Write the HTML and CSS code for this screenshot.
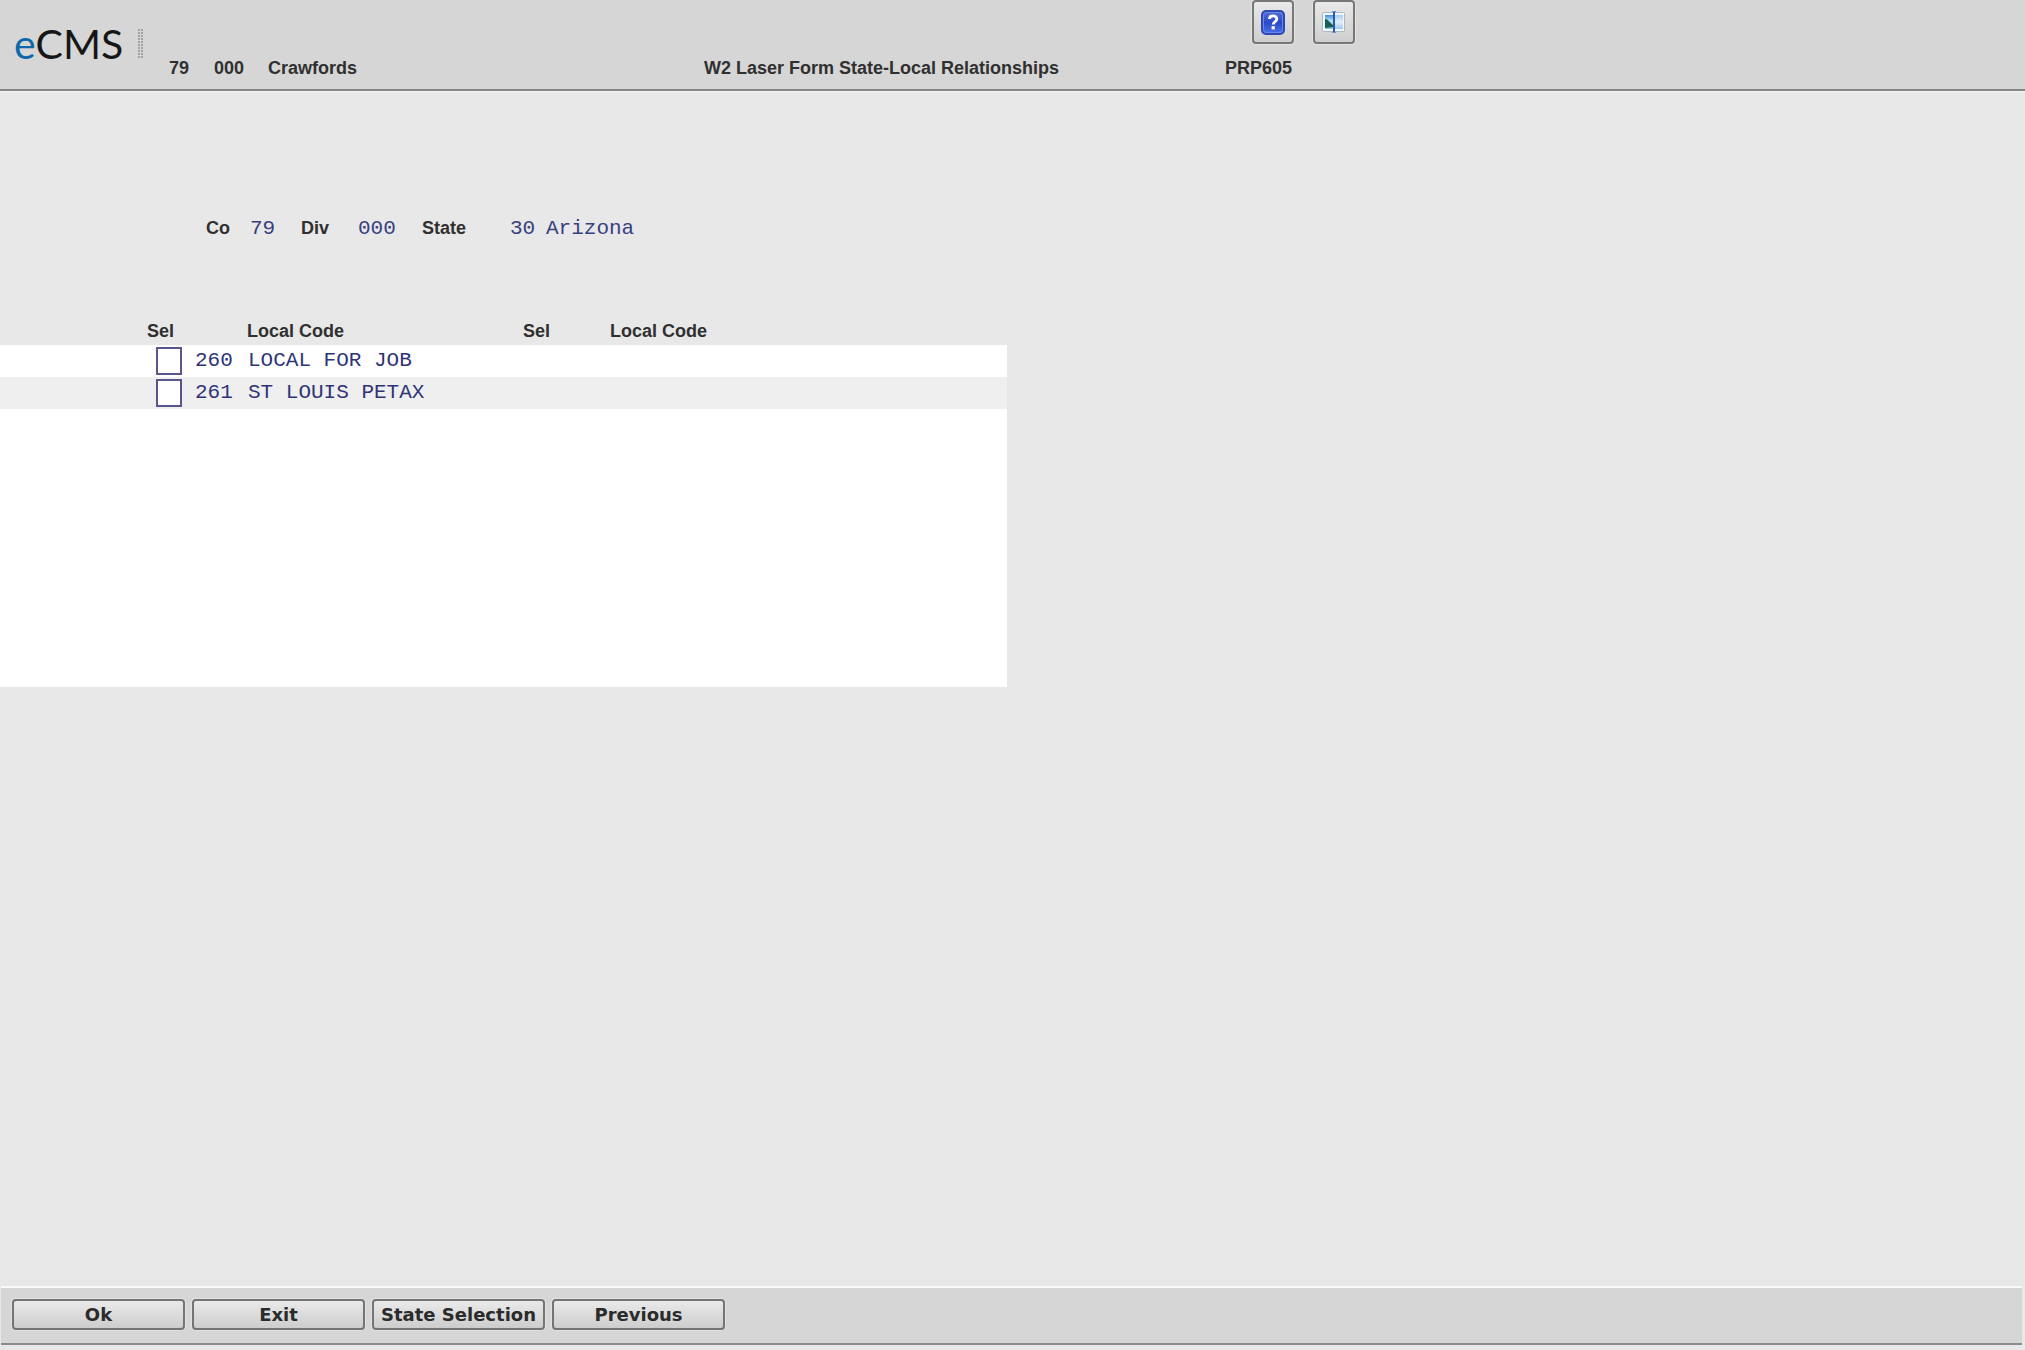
FILE: index.html
```html
<!DOCTYPE html>
<html lang="en">
<head>
<meta charset="utf-8">
<title>W2 Laser Form State-Local Relationships</title>
<link rel="stylesheet" href="styles.css">
</head>
<body>
<header class="topbar">
  <div class="brand">
    <span class="logo"><span class="logo-e">e</span>CMS</span>
    <svg class="grip" width="6" height="30" viewBox="0 0 6 30">
      <path d="M1 0V30M4 0V30" stroke="#a2a2a2" stroke-width="2" stroke-dasharray="2 1"/>
    </svg>
  </div>
  <div class="company"><span>79</span><span>000</span><span>Crawfords</span></div>
  <h1 class="title">W2 Laser Form State-Local Relationships</h1>
  <div class="side">
    <div class="tools">
      <button class="tool" type="button" aria-label="Help">
        <svg width="24" height="26" viewBox="0 0 24 26">
          <defs><linearGradient id="help" x1="0" y1="0" x2="0" y2="1"><stop offset="0" stop-color="#5872d8"/><stop offset=".5" stop-color="#2b48c8"/><stop offset="1" stop-color="#4a74ea"/></linearGradient></defs>
          <rect x="1" y="2" width="22" height="23" rx="4" fill="url(#help)" stroke="#3048b4" stroke-width="2"/>
          <rect x="2.500" y="3.500" width="19" height="20" rx="3" fill="none" stroke="#6c88e6"/>
          <path d="M8.500 10C8.500 5.800 15.800 5.800 15.800 10C15.800 12.700 12.200 12.500 12.200 15.600" fill="none" stroke="#fff" stroke-width="2.800"/>
          <rect x="10.600" y="17.200" width="3.200" height="3.200" fill="#fff"/>
        </svg>
      </button>
      <button class="tool" type="button" aria-label="Split view">
        <svg width="26" height="24" viewBox="0 0 26 24">
          <defs>
            <linearGradient id="sky" x1="0" y1="0" x2="0" y2="1"><stop offset="0" stop-color="#3f8fdc"/><stop offset=".4" stop-color="#b4def2"/><stop offset="1" stop-color="#7fc4d8"/></linearGradient>
            <linearGradient id="pale" x1="0" y1="0" x2="0" y2="1"><stop offset="0" stop-color="#a4cdf4"/><stop offset=".5" stop-color="#e2f0fb"/><stop offset="1" stop-color="#9cc6ee"/></linearGradient>
          </defs>
          <rect x="1.500" y="2.500" width="22" height="19" rx="1" fill="#f2f7fa" stroke="#a9b8c2"/>
          <rect x="4" y="5" width="8" height="14" fill="url(#sky)"/>
          <path d="M4 9C7 9 8 12 12 15V17L4 18Z" fill="#1c5c54"/>
          <rect x="14" y="5" width="8" height="14" fill="url(#pale)"/>
          <path d="M13 1V23" stroke="#2c56b4" stroke-width="2"/>
          <path d="M11 1.500H15M11 22.500H15" stroke="#6d91d2"/>
        </svg>
      </button>
    </div>
    <span class="program">PRP605</span>
  </div>
</header>

<main class="content">
  <div class="fields">
    <span class="label">Co</span><span>79</span>
    <span class="label">Div</span><span>000</span>
    <span class="label">State</span><span>30</span><span>Arizona</span>
  </div>
  <div class="list">
    <table class="locals">
      <colgroup><col class="c-sel"><col class="c-code"><col class="c-name"><col class="c-sel2"><col></colgroup>
      <thead>
        <tr><th class="sel-head">Sel</th><th class="code-head" colspan="2">Local Code</th><th>Sel</th><th>Local Code</th></tr>
      </thead>
      <tbody>
        <tr><td class="sel-cell"><input class="sel" type="text" maxlength="1" aria-label="Select 260"></td><td>260</td><td>LOCAL FOR JOB</td><td></td><td></td></tr>
        <tr><td class="sel-cell"><input class="sel" type="text" maxlength="1" aria-label="Select 261"></td><td>261</td><td>ST LOUIS PETAX</td><td></td><td></td></tr>
      </tbody>
    </table>
  </div>
</main>

<footer class="actions">
  <button class="action" type="button">Ok</button>
  <button class="action" type="button">Exit</button>
  <button class="action" type="button">State Selection</button>
  <button class="action" type="button">Previous</button>
</footer>
</body>
</html>
```
FILE: styles.css
```css
* { box-sizing: border-box; }

body {
  margin: 0;
  min-height: 100vh;
  display: flex;
  flex-direction: column;
  background: #e8e8e8;
  color: #303030;
  font: bold 18px/24px "Liberation Sans", Arial, sans-serif;
}

.topbar {
  display: grid;
  grid-template-columns: 169px 535px 521px 1fr;
  align-items: end;
  height: 91px;
  padding-bottom: 9px;
  background: #d6d6d6;
  border-bottom: 2px solid #858585;
  box-shadow: 0 1px #f4f4f4;
}

.brand {
  display: flex;
  align-items: center;
  gap: 15px;
  padding: 0 0 12px 14px;
}

.logo {
  font: 41px/48px Lato, sans-serif;
  color: #161616;
}

.logo-e { color: #0c68a8; }

.company {
  display: grid;
  grid-template-columns: 45px 54px auto;
}

.title {
  margin: 0;
  font: inherit;
}

.side {
  display: flex;
  flex-direction: column;
  gap: 12px;
}

.tools {
  display: flex;
  gap: 19px;
  padding-left: 27px;
}

.tool {
  display: flex;
  align-items: center;
  justify-content: center;
  width: 42px;
  height: 44px;
  padding: 0;
  border: 2px solid #777;
  border-radius: 4px;
  background: linear-gradient(#e9e9e9, #cecece);
  box-shadow: 0 0 0 1px #e4e4e4;
}

.content { flex: 1; }

.fields {
  display: grid;
  grid-template-columns: 44px 51px 57px 64px 88px 36px auto;
  align-items: baseline;
  padding: 125px 0 76px 206px;
  color: #38417f;
  font: 21px/24px "Liberation Mono", "Courier New", monospace;
}

.label {
  color: #303030;
  font: bold 18px/24px "Liberation Sans", Arial, sans-serif;
}

.list {
  max-width: 1007px;
  min-height: 370px;
  background: #fff;
}

.locals {
  width: 100%;
  table-layout: fixed;
  border-collapse: collapse;
}

.c-sel { width: 195px; }
.c-code { width: 53px; }
.c-name { width: 275px; }
.c-sel2 { width: 87px; }

.locals th {
  height: 28px;
  padding: 0;
  text-align: left;
  background: #e8e8e8;
}

.locals .sel-head { padding-left: 147px; }
.locals .code-head { padding-left: 52px; }

.locals td {
  height: 32px;
  padding: 0;
  color: #2f3478;
  font: 21px/24px "Liberation Mono", "Courier New", monospace;
}

.locals tbody tr:nth-child(even) { background: #efefef; }
.locals .sel-cell { padding-left: 156px; }

.sel {
  display: block;
  width: 26px;
  height: 28px;
  padding: 0 4px;
  border: 2px solid #58568c;
  background: #fff;
  font: inherit;
}

.actions {
  display: flex;
  gap: 7px;
  height: 59px;
  margin: 0 3px 5px 1px;
  padding: 11px;
  background: #d6d6d6;
  border-top: 2px solid #fafafa;
  border-bottom: 2px solid #8a8a8a;
}

.action {
  width: 173px;
  height: 31px;
  padding: 0;
  border: 2px solid #747474;
  border-radius: 4px;
  background: linear-gradient(#eaeaea, #cdcdcd);
  box-shadow: 0 0 0 1px #e2e2e2;
  color: #2b2b2b;
  font: bold 18px/24px "DejaVu Sans", Verdana, sans-serif;
}
```
